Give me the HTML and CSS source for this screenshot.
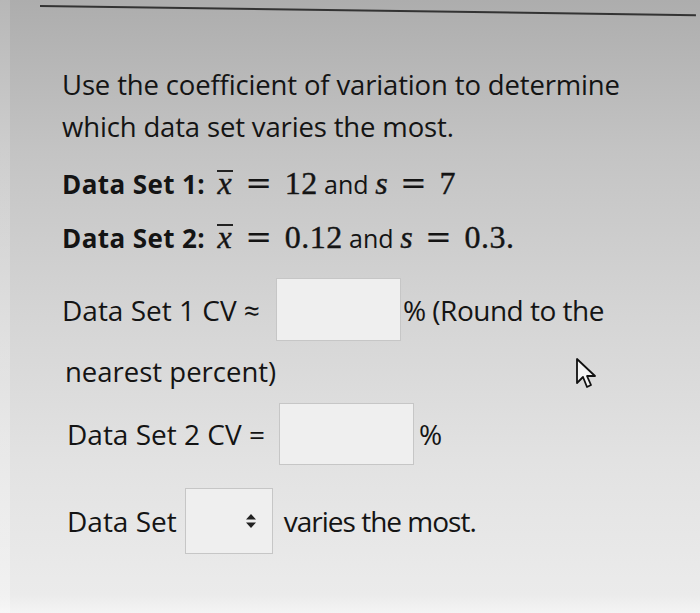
FILE: index.html
```html
<!DOCTYPE html>
<html>
<head>
<meta charset="utf-8">
<link rel="stylesheet" href="styles.css">
</head>
<body>
<div class="screen">
  <div class="edge"></div>
  <div class="rule"></div>
  <div class="content">
    <p class="intro">Use the coefficient of variation to determine<br>which data set varies the most.</p>
    <p class="given"><b>Data Set 1:</b> <span class="math"><i class="xbar">x</i><span class="eq">=</span>12</span> and <span class="math"><i>s</i><span class="eq">=</span>7</span></p>
    <p class="given g2"><b>Data Set 2:</b> <span class="math"><i class="xbar">x</i><span class="eq">=</span>0.12</span> and <span class="math"><i>s</i><span class="eq">=</span>0.3.</span></p>
    <div class="row r1"><span>Data Set 1 CV ≈</span><span class="box b1"></span><span class="tight">% (Round to the</span></div>
    <p class="cont">nearest percent)</p>
    <div class="row r2"><span>Data Set 2 CV =</span><span class="box b2"></span><span>%</span></div>
    <div class="row r3"><span>Data Set</span><span class="box sel"><svg width="10" height="14" viewBox="0 0 10 14"><path d="M5 0 L10 5.5 L0 5.5 Z M5 14 L10 8.5 L0 8.5 Z" fill="#222"/></svg></span><span class="tighter">varies the most.</span></div>
  </div>
  <svg class="cursor" width="24" height="34" viewBox="0 0 24 34"><path d="M2 2 L2 26 L8 20 L12 30 L16 28 L12 19 L20 19 Z" fill="#f4f4f4" stroke="#111" stroke-width="1.8" stroke-linejoin="round"/></svg>
</div>
</body>
</html>
```

FILE: styles.css
```css
html, body { margin: 0; padding: 0; }
body { width: 700px; height: 613px; overflow: hidden; }
.screen {
  position: relative;
  width: 700px; height: 613px;
  background: linear-gradient(180deg, #adadad 0%, #c4c4c4 25%, #d4d4d4 50%, #e2e2e2 75%, #ebebeb 97%, #f4f4f4 100%);
  font-family: "Open Sans", "Noto Sans", sans-serif;
  color: #141414;
}
.edge {
  position: absolute; left: 0; top: 0; bottom: 0; width: 10px;
  background: linear-gradient(180deg, rgba(255,255,255,0.12), rgba(255,255,255,0.3));
}
.rule {
  position: absolute; left: 40px; top: 5px; width: 656px; height: 2px;
  background: #333;
  transform-origin: left center;
  transform: rotate(0.8deg);
}
.content { padding: 64px 0 0 62px; }
p { margin: 0; }
.intro { font-size: 27.5px; line-height: 42px; letter-spacing: -0.15px; }
.given { font-size: 25px; margin-top: 16px; line-height: 40px; white-space: nowrap; }
.given b { font-weight: 700; font-size: 26px; letter-spacing: 0.4px; }
.g2 { margin-top: 14px; }
.math { font-family: "Liberation Serif", "DejaVu Serif", serif; font-size: 32px; line-height: 20px; letter-spacing: 0.5px; -webkit-text-stroke: 0.4px #141414; }
.math i { font-style: italic; }
.eq { font-family: "DejaVu Serif", serif; font-size: 32px; margin: 0 12px; -webkit-text-stroke: 0; }
.xbar {
  display: inline-block; line-height: 0.55em;
  border-top: 2px solid #222; padding: 3px 1px 0; margin-left: 5px;
}
.row { display: flex; align-items: center; font-size: 28px; }
.r1 { margin-top: 20px; }
.r2 { margin-top: 11px; padding-left: 5px; }
.r3 { margin-top: 23px; padding-left: 5px; }
.tight { letter-spacing: -0.5px; }
.tighter { letter-spacing: -1px; }
.box {
  display: inline-block; background: #efefef; border: 1px solid #c6c6c6;
  box-sizing: border-box;
}
.b1 { width: 125px; height: 63px; margin: 0 2px 0 16px; }
.b2 { width: 135px; height: 62px; margin: 0 5px 0 14px; }
.sel { width: 88px; height: 66px; display: flex; align-items: center; justify-content: flex-end; padding-right: 16px; margin: 0 11px 0 8px; }
.cont { font-size: 27.5px; line-height: 40px; margin-top: 11px; margin-left: 3px; }
.cursor { position: absolute; left: 575px; top: 357px; }
```
